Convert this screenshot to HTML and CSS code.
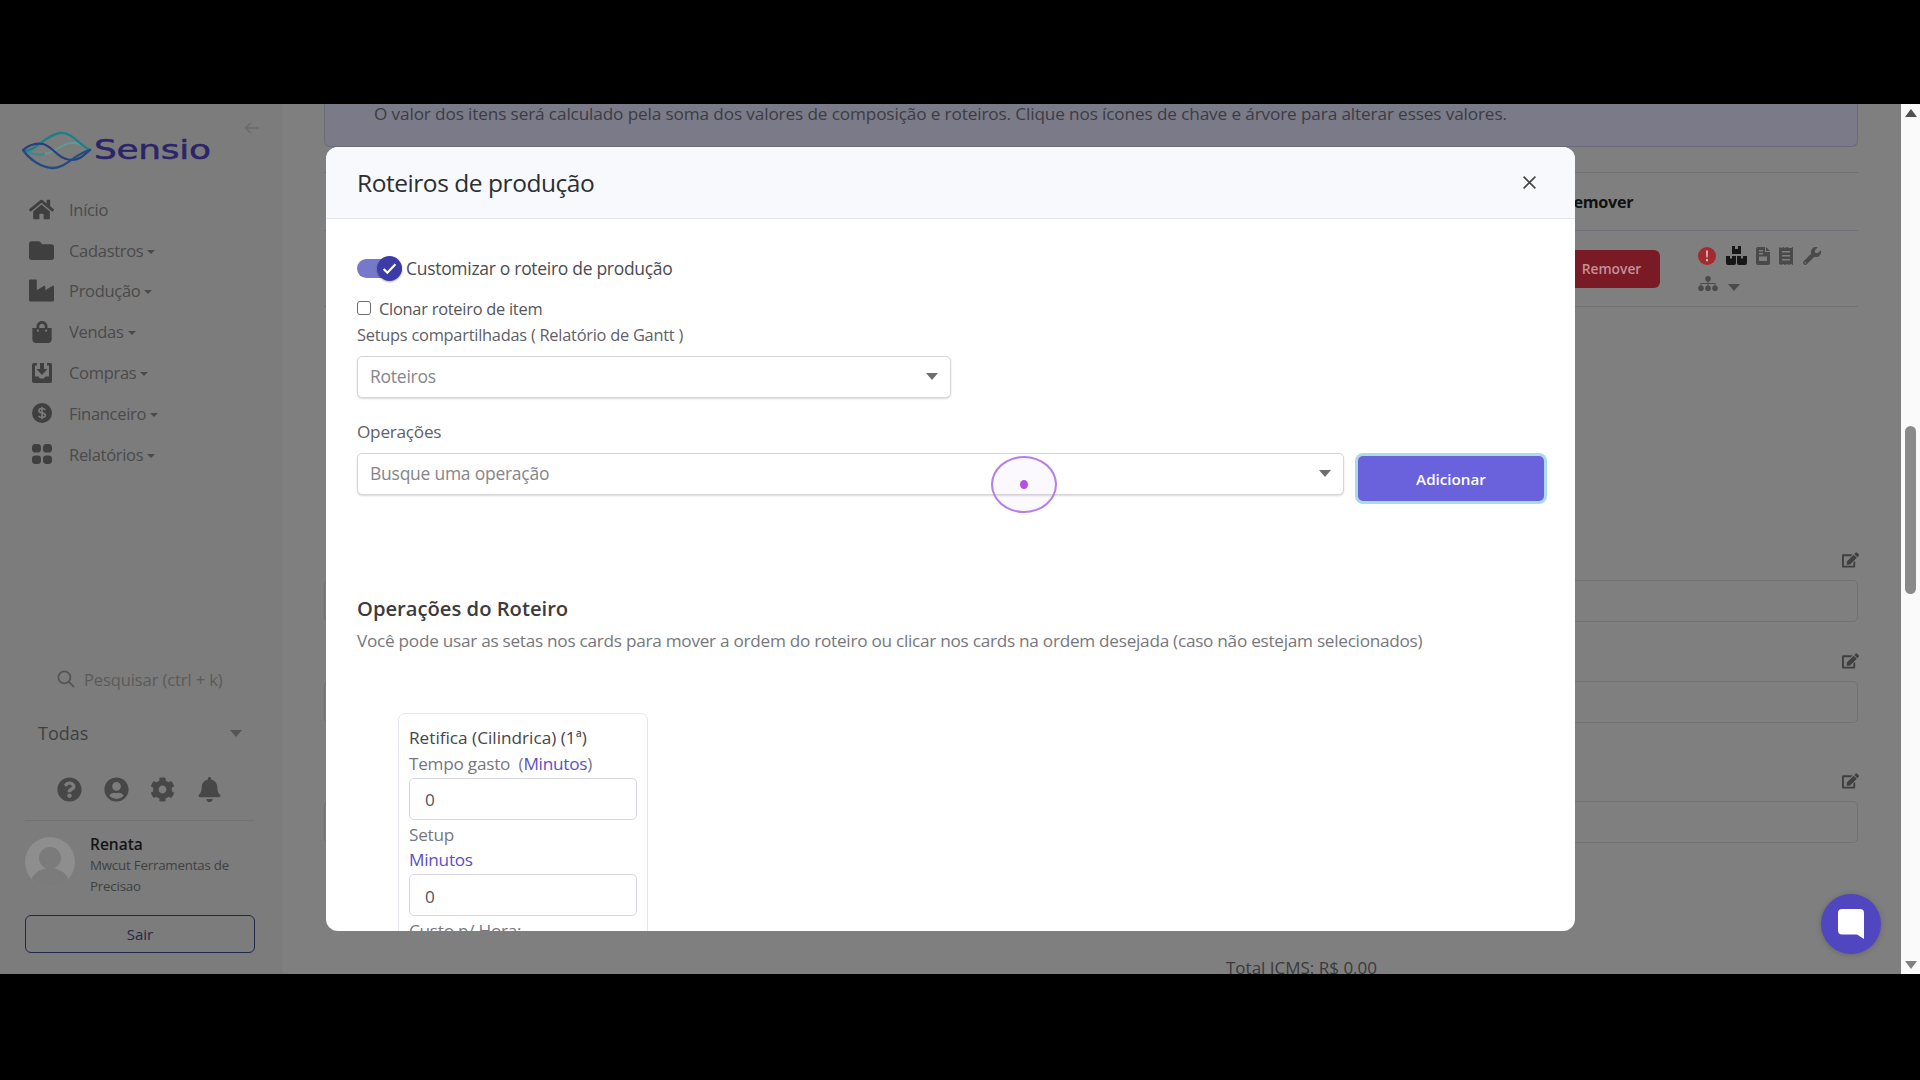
FILE: index.html
```html
<!DOCTYPE html>
<html lang="pt-BR">
<head>
<meta charset="utf-8">
<title>Roteiros de produção</title>
<link rel="stylesheet" href="styles.css">
</head>
<body>
<div class="letterbox-top"></div>
<div class="stage">
  <div class="app">
    <aside class="sidebar">
      <div class="brand">
        <svg class="logo-mark" viewBox="0 0 72 42" fill="none" stroke-linecap="round">
          <path d="M22 24C30 24 40 14 48 13C55 12 60 15 66 19" stroke="#5f9a94" stroke-width="2"/>
          <path d="M1 20C10 24 16 26 22 24" stroke="#3f8790" stroke-width="2"/>
          <path d="M1 20C12 24 22 5 38 3C50 2 56 14 68 20" stroke="#1d7f8a" stroke-width="2.3"/>
          <path d="M1 20C8 14 15 13 21 14C32 17 36 30 50 30C58 30 62 25 68 20" stroke="#27417f" stroke-width="2.2"/>
          <path d="M1 20C8 30 20 38 31 38C44 38 52 24 68 20" stroke="#234a83" stroke-width="2.3"/>
        </svg>
        <span class="logo-word">Sensio</span>
        <svg class="back" viewBox="0 0 16 14" fill="none" stroke="#6b6b6b" stroke-width="1.6"><path d="M15 7H2M7 1.5L1.5 7L7 12.5"/></svg>
      </div>
      <nav class="nav">
        <a class="nav-item"><span class="nav-ico"><svg viewBox="0 0 576 512"><path d="M280.37 148.26L96 300.11V464a16 16 0 0 0 16 16l112.06-.29a16 16 0 0 0 15.92-16V368a16 16 0 0 1 16-16h64a16 16 0 0 1 16 16v95.64a16 16 0 0 0 16 16.05L464 480a16 16 0 0 0 16-16V300L295.67 148.26a12.19 12.19 0 0 0-15.3 0zM571.6 251.47L488 182.56V44.05a12 12 0 0 0-12-12h-56a12 12 0 0 0-12 12v72.61L318.47 43a48 48 0 0 0-61 0L4.34 251.47a12 12 0 0 0-1.6 16.9l25.5 31A12 12 0 0 0 45.15 301l235.22-193.74a12.19 12.19 0 0 1 15.3 0L530.9 301a12 12 0 0 0 16.9-1.6l25.5-31a12 12 0 0 0-1.7-16.93z"/></svg></span>Início</a>
        <a class="nav-item"><span class="nav-ico"><svg viewBox="0 0 512 512"><path d="M464 128H272l-64-64H48C21.49 64 0 85.49 0 112v288c0 26.51 21.49 48 48 48h416c26.51 0 48-21.49 48-48V176c0-26.51-21.49-48-48-48z"/></svg></span><span class="caret-after">Cadastros</span></a>
        <a class="nav-item"><span class="nav-ico"><svg viewBox="0 0 512 512"><path d="M475.115 163.781L336 252.309v-68.28c0-18.916-20.931-30.399-36.885-20.248L160 252.309V56c0-13.255-10.745-24-24-24H24C10.745 32 0 42.745 0 56v400c0 13.255 10.745 24 24 24h464c13.255 0 24-10.745 24-24V184.029c0-18.917-20.931-30.399-36.885-20.248z"/></svg></span><span class="caret-after">Produção</span></a>
        <a class="nav-item"><span class="nav-ico"><svg class="bag" viewBox="0 0 448 512"><path d="M352 160v-32C352 57.42 294.579 0 224 0 153.42 0 96 57.42 96 128v32H0v272c0 44.183 35.817 80 80 80h288c44.183 0 80-35.817 80-80V160h-96zm-192-32c0-35.29 28.71-64 64-64s64 28.71 64 64v32H160v-32zm160 120c-13.255 0-24-10.745-24-24s10.745-24 24-24 24 10.745 24 24-10.745 24-24 24zm-192 0c-13.255 0-24-10.745-24-24s10.745-24 24-24 24 10.745 24 24-10.745 24-24 24z"/></svg></span><span class="caret-after">Vendas</span></a>
        <a class="nav-item"><span class="nav-ico"><svg class="small" viewBox="0 0 20 20"><path fill-rule="evenodd" d="M2 0H5V2.5H3V13.5H6.5L8 15.5H12L13.5 13.5H17V2.5H15V0H18A2 2 0 0 1 20 2V18A2 2 0 0 1 18 20H2A2 2 0 0 1 0 18V2A2 2 0 0 1 2 0Z"/><path d="M8 0H12V6H15.5L10 12L4.5 6H8Z"/></svg></span><span class="caret-after">Compras</span></a>
        <a class="nav-item"><span class="nav-ico"><svg class="small" viewBox="0 0 24 24"><circle cx="12" cy="12" r="12"/><path d="M16 8.2C15.4 7 14 6.6 12 6.6C9.8 6.6 8.3 7.6 8.3 9.2C8.3 12.8 16 11 16 14.8C16 16.4 14.3 17.4 12 17.4C10 17.4 8.6 16.8 8 15.6M12 4.4V19.6" fill="none" stroke="#7b7b7b" stroke-width="2"/></svg></span><span class="caret-after">Financeiro</span></a>
        <a class="nav-item"><span class="nav-ico"><svg class="small" viewBox="0 0 20 20"><rect width="9" height="8.6" rx="3.4"/><rect x="11" width="9" height="8.6" rx="3.4"/><rect y="11.4" width="9" height="8.6" rx="3.4"/><rect x="11" y="11.4" width="9" height="8.6" rx="3.4"/></svg></span><span class="caret-after">Relatórios</span></a>
      </nav>
      <div class="side-bottom">
        <div class="search">
          <svg viewBox="0 0 18 18" fill="none" stroke="#555" stroke-width="1.8" stroke-linecap="round"><circle cx="7.4" cy="7.4" r="6"/><path d="M12 12L16.6 16.6"/></svg>
          <span>Pesquisar (ctrl + k)</span>
        </div>
        <div class="company"><span>Todas</span><i class="tri tri-side"></i></div>
        <div class="tools">
          <svg viewBox="0 0 512 512"><path d="M504 256c0 136.997-111.043 248-248 248S8 392.997 8 256C8 119.083 119.043 8 256 8s248 111.083 248 248zM262.655 90c-54.497 0-89.255 22.957-116.549 63.758-3.536 5.286-2.353 12.415 2.715 16.258l34.699 26.31c5.205 3.947 12.621 3.008 16.665-2.122 17.864-22.658 30.113-35.797 57.303-35.797 20.429 0 45.698 13.148 45.698 32.958 0 14.976-12.363 22.667-32.534 33.976C247.128 238.528 216 254.941 216 296v4c0 6.627 5.373 12 12 12h56c6.627 0 12-5.373 12-12v-1.333c0-28.462 83.186-29.647 83.186-106.667 0-58.002-60.165-102-116.531-102zM256 338c-25.365 0-46 20.635-46 46 0 25.364 20.635 46 46 46s46-20.636 46-46c0-25.365-20.635-46-46-46z"/></svg>
          <svg viewBox="0 0 496 512"><path d="M248 8C111 8 0 119 0 256s111 248 248 248 248-111 248-248S385 8 248 8zm0 96c48.6 0 88 39.4 88 88s-39.4 88-88 88-88-39.4-88-88 39.4-88 88-88zm0 344c-58.7 0-111.3-26.6-146.5-68.2 18.8-35.4 55.6-59.8 98.5-59.8 2.4 0 4.8.4 7.1 1.1 13 4.2 26.6 6.9 40.9 6.9 14.3 0 28-2.7 40.9-6.9 2.3-.7 4.7-1.1 7.1-1.1 42.9 0 79.7 24.4 98.5 59.8C359.3 421.4 306.7 448 248 448z"/></svg>
          <svg viewBox="0 0 512 512"><path d="M487.4 315.7l-42.6-24.6c4.3-23.2 4.3-47 0-70.2l42.6-24.6c4.9-2.8 7.1-8.6 5.5-14-11.1-35.6-30-67.8-54.7-94.6-3.8-4.1-10-5.1-14.8-2.3L380.8 110c-17.9-15.4-38.5-27.3-60.8-35.1V25.8c0-5.6-3.9-10.5-9.4-11.7-36.7-8.2-74.3-7.8-109.2 0-5.5 1.2-9.4 6.1-9.4 11.7V75c-22.2 7.9-42.8 19.8-60.8 35.1L88.7 85.5c-4.9-2.8-11-1.9-14.8 2.3-24.7 26.7-43.6 58.9-54.7 94.6-1.7 5.4.6 11.2 5.5 14L67.3 221c-4.3 23.2-4.3 47 0 70.2l-42.6 24.6c-4.9 2.8-7.1 8.6-5.5 14 11.1 35.6 30 67.8 54.7 94.6 3.8 4.1 10 5.1 14.8 2.3l42.6-24.6c17.9 15.4 38.5 27.3 60.8 35.1v49.2c0 5.6 3.9 10.5 9.4 11.7 36.7 8.2 74.3 7.8 109.2 0 5.5-1.2 9.4-6.1 9.4-11.7v-49.2c22.2-7.9 42.8-19.8 60.8-35.1l42.6 24.6c4.9 2.8 11 1.9 14.8-2.3 24.7-26.7 43.6-58.9 54.7-94.6 1.5-5.5-.7-11.3-5.6-14.1zM256 336c-44.1 0-80-35.9-80-80s35.9-80 80-80 80 35.9 80 80-35.9 80-80 80z"/></svg>
          <svg viewBox="0 0 448 512"><path d="M224 512c35.32 0 63.97-28.65 63.97-64H160.03c0 35.35 28.65 64 63.97 64zm215.39-149.71c-19.32-20.76-55.47-51.99-55.47-154.29 0-77.7-54.48-139.9-127.94-155.16V32c0-17.67-14.32-32-31.98-32s-31.98 14.33-31.98 32v20.84C118.56 68.1 64.08 130.3 64.08 208c0 102.3-36.15 133.53-55.47 154.29-6 6.45-8.66 14.16-8.61 21.71.11 16.4 12.98 32 32.1 32h383.8c19.12 0 32-15.6 32.1-32 .05-7.55-2.61-15.27-8.61-21.71z"/></svg>
        </div>
        <div class="profile">
          <svg class="avatar" viewBox="0 0 50 50"><defs><clipPath id="av"><circle cx="25" cy="25" r="25"/></clipPath></defs><circle cx="25" cy="25" r="25" fill="#8e8e8e"/><g clip-path="url(#av)" fill="#7b7b7b"><circle cx="25" cy="21" r="11"/><ellipse cx="25" cy="46" rx="19" ry="15"/></g></svg>
          <div class="who">
            <strong>Renata</strong>
            <span>Mwcut Ferramentas de Precisao</span>
          </div>
        </div>
        <button class="logout">Sair</button>
      </div>
    </aside>

    <main class="main">
      <div class="notice">O valor dos itens será calculado pela soma dos valores de composição e roteiros. Clique nos ícones de chave e árvore para alterar esses valores.</div>
      <div class="table-head"><span></span><b>Remover</b><span></span></div>
      <div class="table-row">
        <span></span>
        <button class="danger">Remover</button>
        <div class="row-icons">
          <svg class="ic-alert" viewBox="0 0 18 18"><circle cx="9" cy="9" r="9" fill="#a32a2f"/><path d="M8 3.6H10L9.7 10.6H8.3ZM8 12H10V14.2H8Z" fill="#d8b8b8"/></svg>
          <svg class="ic-boxes" viewBox="0 0 21 19"><path d="M6 0H9V3H12V0H15V8H6ZM0 10H4V12.5H6V10H10V17A2 2 0 0 1 8 19H2A2 2 0 0 1 0 17ZM11 10H15V12.5H17V10H21V17A2 2 0 0 1 19 19H13A2 2 0 0 1 11 17Z" fill="#161616"/></svg>
          <svg class="ic-doc" viewBox="0 0 14 18"><path fill-rule="evenodd" d="M2 0H9V5H14V16A2 2 0 0 1 12 18H2A2 2 0 0 1 0 16V2A2 2 0 0 1 2 0ZM10 0L14 4H10ZM3 3V4.4H7V3ZM3 6V7.4H7V6ZM3 9.4V14H11V9.4Z" fill="#4a4a4a"/></svg>
          <svg class="ic-doc" viewBox="0 0 14 18"><path fill-rule="evenodd" d="M0 0L2 1L4 0L6 1L8 0L10 1L12 1L14 0V18L12 17L10 18L8 17L6 18L4 17L2 18L0 17ZM3 4V5.4H11V4ZM3 8V9.4H11V8ZM3 12V13.4H11V12Z" fill="#4a4a4a"/></svg>
          <svg class="ic-wrench" viewBox="0 0 512 512"><path fill="#4a4a4a" d="M507.73 109.1c-2.24-9.03-13.54-12.09-20.12-5.51l-74.36 74.36-67.88-11.31-11.31-67.88 74.36-74.36c6.62-6.62 3.43-17.9-5.66-20.16-47.38-11.74-99.55.91-136.58 37.93-39.64 39.64-50.55 97.1-34.05 147.2L18.74 402.76c-24.99 24.99-24.99 65.51 0 90.5 24.99 24.99 65.51 24.99 90.5 0l213.21-213.21c50.12 16.71 107.47 5.68 147.37-34.22 37.07-37.07 49.7-89.32 37.91-136.73zM64 472c-13.25 0-24-10.75-24-24 0-13.26 10.75-24 24-24s24 10.74 24 24c0 13.25-10.75 24-24 24z"/></svg>
          <span class="break"></span>
          <svg class="ic-tree" viewBox="0 0 21 16"><g fill="#4a4a4a"><circle cx="10.5" cy="3" r="3"/><circle cx="3" cy="13" r="3"/><circle cx="10.5" cy="13" r="3"/><circle cx="18" cy="13" r="3"/><path d="M10 5H11V7.5H18.5V11H17.5V8.5H11V11H10V8.5H3.5V11H2.5V7.5H10Z"/></g></svg>
          <i class="tri tri-row"></i>
        </div>
      </div>
      <div class="field first">
        <svg viewBox="0 0 576 512"><path d="M402.6 83.2l90.2 90.2c3.8 3.8 3.8 10 0 13.8L274.4 405.6l-92.8 10.3c-12.4 1.4-22.9-9.1-21.5-21.5l10.3-92.8L388.8 83.2c3.8-3.8 10-3.8 13.8 0zm162-22.9l-48.8-48.8c-15.2-15.2-39.9-15.2-55.2 0l-35.4 35.4c-3.8 3.8-3.8 10 0 13.8l90.2 90.2c3.8 3.8 10 3.8 13.8 0l35.4-35.4c15.2-15.3 15.2-40 0-55.2zM384 346.2V448H64V128h229.8c3.2 0 6.2-1.3 8.5-3.5l40-40c7.6-7.6 2.2-20.5-8.5-20.5H48C21.5 64 0 85.5 0 112v352c0 26.5 21.5 48 48 48h352c26.5 0 48-21.5 48-48V306.2c0-10.7-12.9-16-20.5-8.5l-40 40c-2.2 2.3-3.5 5.3-3.5 8.5z"/></svg>
        <div class="ghost-input"></div>
      </div>
      <div class="field second">
        <svg viewBox="0 0 576 512"><path d="M402.6 83.2l90.2 90.2c3.8 3.8 3.8 10 0 13.8L274.4 405.6l-92.8 10.3c-12.4 1.4-22.9-9.1-21.5-21.5l10.3-92.8L388.8 83.2c3.8-3.8 10-3.8 13.8 0zm162-22.9l-48.8-48.8c-15.2-15.2-39.9-15.2-55.2 0l-35.4 35.4c-3.8 3.8-3.8 10 0 13.8l90.2 90.2c3.8 3.8 10 3.8 13.8 0l35.4-35.4c15.2-15.3 15.2-40 0-55.2zM384 346.2V448H64V128h229.8c3.2 0 6.2-1.3 8.5-3.5l40-40c7.6-7.6 2.2-20.5-8.5-20.5H48C21.5 64 0 85.5 0 112v352c0 26.5 21.5 48 48 48h352c26.5 0 48-21.5 48-48V306.2c0-10.7-12.9-16-20.5-8.5l-40 40c-2.2 2.3-3.5 5.3-3.5 8.5z"/></svg>
        <div class="ghost-input"></div>
      </div>
      <div class="field third">
        <svg viewBox="0 0 576 512"><path d="M402.6 83.2l90.2 90.2c3.8 3.8 3.8 10 0 13.8L274.4 405.6l-92.8 10.3c-12.4 1.4-22.9-9.1-21.5-21.5l10.3-92.8L388.8 83.2c3.8-3.8 10-3.8 13.8 0zm162-22.9l-48.8-48.8c-15.2-15.2-39.9-15.2-55.2 0l-35.4 35.4c-3.8 3.8-3.8 10 0 13.8l90.2 90.2c3.8 3.8 10 3.8 13.8 0l35.4-35.4c15.2-15.3 15.2-40 0-55.2zM384 346.2V448H64V128h229.8c3.2 0 6.2-1.3 8.5-3.5l40-40c7.6-7.6 2.2-20.5-8.5-20.5H48C21.5 64 0 85.5 0 112v352c0 26.5 21.5 48 48 48h352c26.5 0 48-21.5 48-48V306.2c0-10.7-12.9-16-20.5-8.5l-40 40c-2.2 2.3-3.5 5.3-3.5 8.5z"/></svg>
        <div class="ghost-input"></div>
      </div>
      <div class="total">Total ICMS: R$ 0,00</div>
    </main>

    <section class="modal">
      <header class="modal-head">
        <h2>Roteiros de produção</h2>
        <svg class="close" viewBox="0 0 14 14" fill="none" stroke="#444" stroke-width="1.5"><path d="M1.5 1.5L12.5 12.5M12.5 1.5L1.5 12.5"/></svg>
      </header>
      <div class="modal-body">
        <div class="toggle-row">
          <span class="switch"><span class="knob"><svg viewBox="0 0 14 12" fill="none" stroke="#fff" stroke-width="2"><path d="M1.5 6.5L5 10L12.5 2"/></svg></span></span>
          <span>Customizar o roteiro de produção</span>
        </div>
        <label class="clone-row"><span class="box"></span>Clonar roteiro de item</label>
        <div class="lbl lbl-setups">Setups compartilhadas ( Relatório de Gantt )</div>
        <div class="select select-short"><span>Roteiros</span><i class="tri"></i></div>
        <div class="lbl lbl-ops">Operações</div>
        <div class="add-row">
          <div class="select select-long"><span>Busque uma operação</span><i class="tri"></i></div>
          <button class="primary">Adicionar</button>
        </div>
        <h3>Operações do Roteiro</h3>
        <p class="hint">Você pode usar as setas nos cards para mover a ordem do roteiro ou clicar nos cards na ordem desejada (caso não estejam selecionados)</p>
        <div class="op-card">
          <div class="op-title">Retifica (Cilindrica) (1ª)</div>
          <div class="op-lbl first-lbl">Tempo gasto &nbsp;(<span class="unit">Minutos</span>)</div>
          <div class="num">0</div>
          <div class="op-lbl">Setup</div>
          <div class="op-lbl unit-line"><span class="unit">Minutos</span></div>
          <div class="num num-second">0</div>
          <div class="op-lbl">Custo p/ Hora:</div>
        </div>
      </div>
    </section>

    <div class="pointer"><span></span></div>

    <div class="chat">
      <svg viewBox="0 0 26 30"><path d="M4 0H22A4 4 0 0 1 26 4V30L19 25.5H4A4 4 0 0 1 0 21.5V4A4 4 0 0 1 4 0Z" fill="#fff"/></svg>
    </div>
  </div>
  <div class="scrollbar">
    <i class="arrow-up"></i>
    <div class="track"><div class="thumb"></div></div>
    <i class="arrow-down"></i>
  </div>
</div>
<div class="letterbox-bottom"></div>
</body>
</html>
```

FILE: styles.css
```css
* { box-sizing: border-box; }
html, body { margin: 0; padding: 0; height: 100%; }
body {
  background: #000;
  font-family: "Open Sans", "Noto Sans", "Liberation Sans", sans-serif;
  overflow: hidden;
  display: flex;
  flex-direction: column;
}
.letterbox-top { height: 104px; background: #000; flex: none; }
.letterbox-bottom { flex: 1; background: #000; }
.stage { height: 870px; flex: none; display: flex; overflow: hidden; }
.app { position: relative; flex: 1; display: flex; overflow: hidden; background: #7f7f7f; }

/* sidebar */
.sidebar {
  width: 282px; flex: none; height: 100%;
  background: #7c7c7c;
  border-right: 1px solid #797979;
  display: flex; flex-direction: column;
  color: #4a4a4a;
  font-size: 16.5px;
  letter-spacing: -.3px;
}
.brand { height: 85px; padding: 26px 0 0 22px; display: flex; align-items: flex-start; position: relative; }
.logo-mark { width: 72px; height: 42px; flex: none; }
.logo-word {
  display: inline-block;
  font-family: "DejaVu Sans", sans-serif;
  font-size: 27px; line-height: 34px;
  color: #2a2468;
  -webkit-text-stroke: .5px #2a2468;
  transform: scaleX(1.33);
  transform-origin: left center;
  margin: 3px 0 0 0;
  letter-spacing: -.2px;
}
.back { position: absolute; left: 244px; top: 17px; width: 16px; height: 14px; }
.nav { display: flex; flex-direction: column; }
.nav-item { height: 40.8px; display: flex; align-items: center; padding-left: 29px; }
.nav-ico { width: 25px; height: 25px; margin-right: 15px; display: flex; align-items: center; justify-content: center; flex: none; }
.nav-ico svg { width: 25px; height: 25px; fill: #3f3f3f; }
.nav-ico svg.small { width: 20px; height: 20px; }
.nav-ico svg.bag { width: 20px; height: 22px; }
.caret-after::after {
  content: ""; display: inline-block; margin-left: 4px; vertical-align: 3px;
  border: 4.5px solid transparent; border-top-color: #4a4a4a; border-bottom: 0;
}
.side-bottom { margin-top: auto; padding: 0 27px 21px 25px; }
.search { height: 40px; display: flex; align-items: center; padding-left: 32px; color: #5a5a5a; letter-spacing: -.1px; }
.search svg { width: 18px; height: 18px; margin-right: 9px; flex: none; }
.company { height: 40px; margin-top: 14px; display: flex; align-items: center; justify-content: space-between; padding: 0 12px 0 13px; font-size: 18px; color: #3f3f3f; letter-spacing: 0; }
.tools { height: 40px; margin-top: 16px; display: flex; align-items: center; justify-content: space-between; padding: 0 32px 0 32px; }
.tools svg { width: 25px; height: 25px; fill: #474747; }
.profile { margin-top: 11px; border-top: 1px solid #727272; padding-top: 17px; display: flex; height: 95px; }
.avatar { width: 50px; height: 50px; flex: none; margin-top: -1px; }
.who { margin-left: 15px; display: flex; flex-direction: column; }
.who strong { font-size: 15.5px; font-weight: 600; color: #141414; line-height: 21px; margin-top: -4px; letter-spacing: 0; }
.who span { font-size: 13.3px; line-height: 21px; color: #404040; width: 160px; letter-spacing: -.2px; }
.logout {
  display: block; width: 230px; height: 38px;
  background: transparent; border: 1px solid #1f2a4a; border-radius: 6px;
  font: 500 15px "Open Sans", sans-serif; color: #1f2a4a;
}
.tri { display: block; width: 0; height: 0; border: 6px solid transparent; border-top: 7px solid #6e6e6e; border-bottom: 0; flex: none; }
.tri-side { border-top-color: #555; }

/* page behind */
.main { flex: 1; min-width: 0; padding: 0 43px 0 42px; color: #3c3c42; font-size: 17.5px; }
.notice {
  height: 43px; background: #7a7a88;
  border: 1px solid #6a6a78; border-top: 0; border-radius: 0 0 6px 6px;
  padding-left: 49px; line-height: 20px;
  white-space: nowrap; overflow: hidden;
  font-size: 17.2px; letter-spacing: -.13px;
}
.table-head {
  margin-top: 25px; height: 59px; border-top: 1px solid #707070; border-bottom: 1px solid #6d7078;
  display: grid; grid-template-columns: 1fr 135px 160px; align-items: center;
}
.table-head b { font-size: 16.2px; font-weight: 700; color: #111; letter-spacing: -.3px; }
.table-row {
  height: 76px; border-bottom: 1px solid #717171;
  display: grid; grid-template-columns: 1fr 135px 160px; align-items: center;
}
.danger {
  width: 97px; height: 38px; border: 0; border-radius: 6px;
  background: #7a1a24; color: #c4909a;
  font: 600 13.8px "Open Sans", sans-serif;
}
.row-icons { display: flex; flex-wrap: wrap; align-items: center; align-content: center; width: 130px; row-gap: 5.5px; }
.break { flex-basis: 100%; height: 0; }
.ic-alert { width: 18px; height: 18px; margin-right: 10px; }
.ic-boxes { width: 21px; height: 19px; margin-right: 9px; }
.ic-doc { width: 14px; height: 18px; margin-right: 9px; }
.ic-wrench { width: 18px; height: 18px; margin-left: 1px; }
.ic-tree { width: 20px; height: 15px; margin-right: 10px; }
.tri-row { border-width: 6px; border-top: 7px solid #4a4a4a; border-bottom: 0; margin-top: 7px; }
.field { display: flex; flex-direction: column; align-items: flex-end; }
.field svg { width: 17px; height: 16px; fill: #3f3f3f; margin: 0 -1px 12px 0; }
.field.first { margin-top: 245px; }
.field.second { margin-top: 31px; }
.field.third { margin-top: 50px; }
.ghost-input { width: 100%; height: 42px; border: 1px solid #717171; border-radius: 5px; }
.total { margin: 114px 0 0 902px; font-size: 17px; line-height: 22px; color: #3a3a3a; white-space: nowrap; }

/* modal */
.modal {
  position: absolute; left: 326px; top: 43px; width: 1249px; height: 784px;
  background: #fff; border-radius: 12px; overflow: hidden;
  color: #5f5f66;
}
.modal-head {
  height: 72px; background: #f8f9fc; border-bottom: 1px solid #e4e5ea;
  display: flex; align-items: center; justify-content: space-between;
  padding: 0 38px 0 31px;
}
.modal-head h2 { margin: 0; font-size: 24.5px; font-weight: 500; color: #2b2e33; letter-spacing: -.45px; }
.close { width: 15px; height: 15px; }
.modal-body { padding: 36px 31px 0 31px; font-size: 17.2px; letter-spacing: -.25px; }
.toggle-row { height: 26px; display: flex; align-items: center; color: #4c4c52; font-size: 17.5px; letter-spacing: -.3px; }
.switch { position: relative; width: 45px; height: 19px; border-radius: 10px; background: #7678c9; margin-right: 4px; flex: none; }
.knob { position: absolute; right: 0; top: -3px; width: 25px; height: 25px; border-radius: 50%; background: #3d3ba6; display: flex; align-items: center; justify-content: center; box-shadow: 0 1px 2px rgba(0,0,0,.3); }
.knob svg { width: 15px; height: 13px; }
.clone-row { margin-top: 15px; height: 24px; display: flex; align-items: center; color: #55555b; font-size: 16.4px; }
.box { width: 14px; height: 14px; border: 1.5px solid #6d6d6d; border-radius: 3px; margin-right: 8px; background: #fff; }
.lbl { height: 24px; line-height: 24px; }
.lbl-setups { margin-top: 3px; font-size: 16.4px; }
.lbl-ops { margin-top: 22px; }
.select {
  height: 42px; margin-top: 9px; background: #fff;
  border: 1px solid #d5d5da; border-radius: 5px; box-shadow: 0 1px 2px rgba(0,0,0,.15);
  padding: 0 12px 2px 12px; display: flex; align-items: center; justify-content: space-between;
  color: #85858b; font-size: 17.5px;
}
.select-short { width: 594px; }
.select-long { width: 987px; margin-top: 0; }
.add-row { margin-top: 9px; display: flex; gap: 14px; height: 50px; align-items: flex-start; }
.primary {
  width: 186px; height: 45px; margin: 3px 0 0 0;
  background: #6a62dc; border: 0; border-radius: 5px;
  box-shadow: 0 0 0 3px #a9dce4;
  color: #fff; font: 600 15.2px "Open Sans", sans-serif; letter-spacing: 0;
}
h3 { margin: 91px 0 0; height: 28px; line-height: 28px; font-size: 20.2px; font-weight: 600; color: #3b3b40; letter-spacing: 0; }
.hint { margin: 7px 0 0; height: 24px; line-height: 24px; white-space: nowrap; color: #77777d; letter-spacing: -.27px; }
.op-card {
  margin: 60px 0 0 41px; width: 250px; height: 300px;
  border: 1px solid #e5e5ec; border-radius: 7px;
  padding: 12px 10px;
}
.op-title { height: 24px; line-height: 24px; color: #45454b; letter-spacing: 0; font-weight: 400; }
.op-lbl { height: 24px; line-height: 24px; margin-top: 3px; color: #77777d; }
.first-lbl { margin-top: 2px; }
.unit-line { margin-top: 1px; }
.unit { color: #5b50c8; }
.num {
  height: 42px; margin-top: 2px; border: 1px solid #d6d6e0; border-radius: 5px;
  padding-left: 15px; line-height: 42px; color: #55555b;
}
.num-second { line-height: 43px; }

/* click pointer */
.pointer {
  position: absolute; left: 991px; top: 352px; width: 66px; height: 57px;
  border: 2.5px solid #b67de8; border-radius: 50%;
  background: rgba(200,150,240,.07);
  display: flex; align-items: center; justify-content: center;
}
.pointer span { width: 8px; height: 9px; border-radius: 50%; background: #b44fe8; }

/* chat */
.chat {
  position: absolute; left: 1821px; top: 790px; width: 60px; height: 60px;
  border-radius: 50%; background: #5046c0;
  display: flex; align-items: center; justify-content: center;
  box-shadow: 0 1px 6px rgba(0,0,0,.2);
}
.chat svg { width: 26px; height: 30px; }

/* scrollbar */
.scrollbar { width: 19px; flex: none; background: #fafafa; display: flex; flex-direction: column; align-items: center; padding: 5px 0 5px; }
.track { flex: 1; width: 100%; padding: 309px 4px 0 4px; }
.thumb { width: 11px; height: 168px; background: #8a8a8a; border-radius: 6px; }
.arrow-up { border: 6px solid transparent; border-bottom: 8px solid #505050; border-top: 0; }
.arrow-down { border: 6px solid transparent; border-top: 8px solid #808080; border-bottom: 0; }
```
